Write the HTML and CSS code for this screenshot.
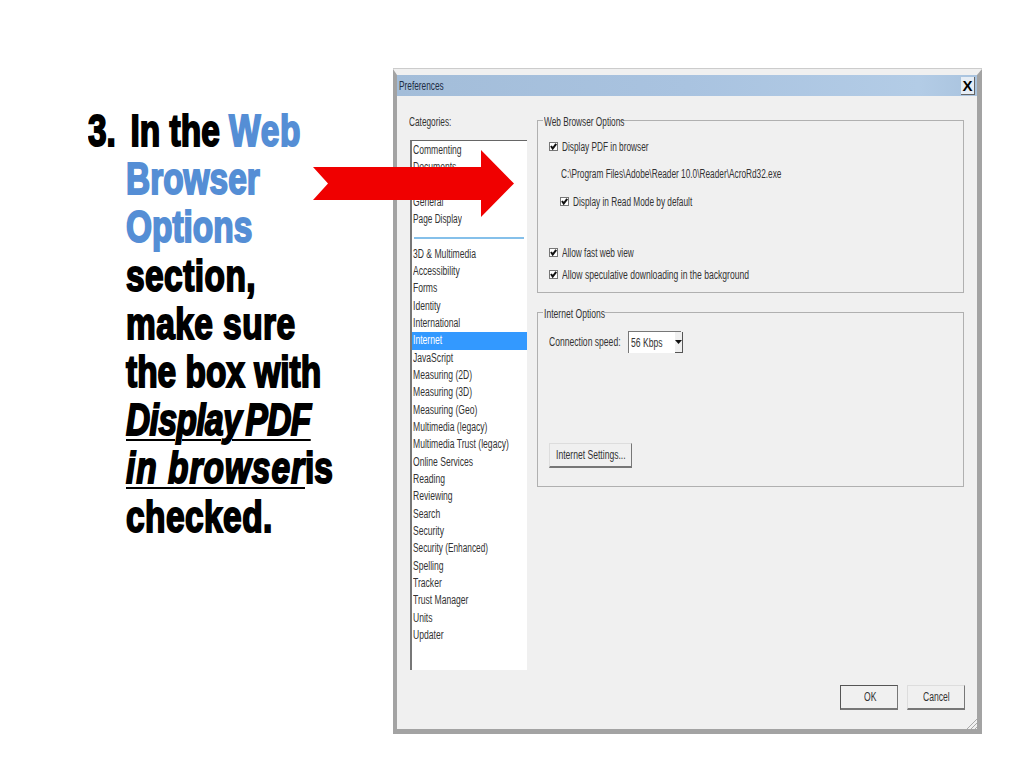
FILE: index.html
```html
<!DOCTYPE html>
<html lang="en">
<head>
  <meta charset="UTF-8" />
  <title>Preferences - Web Browser Options</title>
  <link rel="stylesheet" href="styles.css">
</head>
<body>

  <div class="slide">
    <!-- Step text -->
    <div class="step">
      <div class="step-line"><span class="step-num">3.</span><span>In the <span class="blue web">Web</span></span></div>
      <div class="step-body">
        <div class="blue">Browser</div>
        <div class="blue">Options</div>
        <div class="wide">section,</div>
        <div class="wide">make sure</div>
        <div>the box with</div>
        <div><em class="pdf pdf-first">Display PDF</em></div>
        <div><em class="pdf pdf-second">in browser</em>is</div>
        <div class="wide">checked.</div>
      </div>
    </div>

    <!-- Preferences dialog -->
    <div class="dialog">
      <div class="titlebar">
        <span class="tx tx-tight">Preferences</span>
        <span class="close">X</span>
      </div>

      <div class="dialog-main">
        <div class="categories">
          <div class="cat-label"><span class="tx tx-tight">Categories:</span></div>
          <div class="cat-list">
            <div class="cat-item"><span class="tx">Commenting</span></div>
            <div class="cat-item"><span class="tx">Documents</span></div>
            <div class="cat-item"><span class="tx">Full Screen</span></div>
            <div class="cat-item"><span class="tx">General</span></div>
            <div class="cat-item"><span class="tx tx-tight">Page Display</span></div>
            <div class="cat-sep"></div>
            <div class="cat-item"><span class="tx">3D &amp; Multimedia</span></div>
            <div class="cat-item"><span class="tx">Accessibility</span></div>
            <div class="cat-item"><span class="tx">Forms</span></div>
            <div class="cat-item"><span class="tx">Identity</span></div>
            <div class="cat-item"><span class="tx">International</span></div>
            <div class="cat-item selected"><span class="tx">Internet</span></div>
            <div class="cat-item"><span class="tx">JavaScript</span></div>
            <div class="cat-item"><span class="tx">Measuring (2D)</span></div>
            <div class="cat-item"><span class="tx">Measuring (3D)</span></div>
            <div class="cat-item"><span class="tx">Measuring (Geo)</span></div>
            <div class="cat-item"><span class="tx">Multimedia (legacy)</span></div>
            <div class="cat-item"><span class="tx">Multimedia Trust (legacy)</span></div>
            <div class="cat-item"><span class="tx">Online Services</span></div>
            <div class="cat-item"><span class="tx">Reading</span></div>
            <div class="cat-item"><span class="tx">Reviewing</span></div>
            <div class="cat-item"><span class="tx">Search</span></div>
            <div class="cat-item"><span class="tx">Security</span></div>
            <div class="cat-item"><span class="tx tx-tight">Security (Enhanced)</span></div>
            <div class="cat-item"><span class="tx">Spelling</span></div>
            <div class="cat-item"><span class="tx">Tracker</span></div>
            <div class="cat-item"><span class="tx">Trust Manager</span></div>
            <div class="cat-item"><span class="tx">Units</span></div>
            <div class="cat-item"><span class="tx">Updater</span></div>
          </div>
        </div>

        <div class="panels">
          <div class="group group-web">
            <span class="legend"><span class="tx tx-tight">Web Browser Options</span></span>
            <div class="check-row row-display">
              <svg class="check" viewBox="0 0 9 9"><rect x="0.5" y="0.5" width="8" height="8" fill="#fff" stroke="#777"/><path d="M2 4 L3.7 6.6 L7.2 1.8" fill="none" stroke="#111" stroke-width="2"/></svg>
              <span class="tx tx-tight">Display PDF in browser</span>
            </div>
            <div class="path-row"><span class="tx tx-tight">C:\Program Files\Adobe\Reader 10.0\Reader\AcroRd32.exe</span></div>
            <div class="check-row row-read">
              <svg class="check" viewBox="0 0 9 9"><rect x="0.5" y="0.5" width="8" height="8" fill="#fff" stroke="#777"/><path d="M2 4 L3.7 6.6 L7.2 1.8" fill="none" stroke="#111" stroke-width="2"/></svg>
              <span class="tx tx-tight">Display in Read Mode by default</span>
            </div>
            <div class="check-row row-fast">
              <svg class="check" viewBox="0 0 9 9"><rect x="0.5" y="0.5" width="8" height="8" fill="#fff" stroke="#777"/><path d="M2 4 L3.7 6.6 L7.2 1.8" fill="none" stroke="#111" stroke-width="2"/></svg>
              <span class="tx tx-tight">Allow fast web view</span>
            </div>
            <div class="check-row row-spec">
              <svg class="check" viewBox="0 0 9 9"><rect x="0.5" y="0.5" width="8" height="8" fill="#fff" stroke="#777"/><path d="M2 4 L3.7 6.6 L7.2 1.8" fill="none" stroke="#111" stroke-width="2"/></svg>
              <span class="tx">Allow speculative downloading in the background</span>
            </div>
          </div>

          <div class="group group-inet">
            <span class="legend"><span class="tx">Internet Options</span></span>
            <div class="speed-row">
              <span class="speed-label"><span class="tx">Connection speed:</span></span>
              <div class="select">
                <span class="select-val"><span class="tx">56 Kbps</span></span>
                <span class="select-btn"><svg width="7" height="4" viewBox="0 0 7 4"><path d="M0 0 H7 L3.5 4 Z" fill="#111"/></svg></span>
              </div>
            </div>
            <button class="btn btn-settings"><span class="tx">Internet Settings...</span></button>
          </div>
        </div>
      </div>

      <div class="dialog-foot">
        <button class="btn btn-ok"><span class="tx">OK</span></button>
        <button class="btn btn-cancel"><span class="tx">Cancel</span></button>
      </div>

      <svg class="grip" width="11" height="11" viewBox="0 0 11 11"><path d="M11 1 L1 11 M11 5 L5 11 M11 9 L9 11" stroke="#aaa" stroke-width="1"/></svg>
    </div>

    <!-- Red arrow over the dialog -->
    <svg class="arrow" width="202" height="68" viewBox="0 0 202 68"><path d="M0 17 H168 V0 L201 33.5 L168 67 V50 H0 L15 33.5 Z" fill="#f00000"/></svg>
  </div>

</body>
</html>
```

FILE: styles.css
```css
* {
  margin: 0;
  padding: 0;
  box-sizing: border-box;
}

body {
  background: #fff;
  font-family: "Liberation Sans", sans-serif;
}

.slide {
  position: relative;
  width: 1024px;
  height: 768px;
  display: flex;
  align-items: flex-start;
  padding: 69px 0 0 88px;
}

/* Step text: no Impact here, so squeeze a heavy sans */
.step {
  flex: none;
  width: 305px;
  margin-top: 38px;
  font-size: 44px;
  font-weight: bold;
  line-height: 48.2px;
  color: #000;
  -webkit-text-stroke: 2px currentColor;
  white-space: nowrap;
  transform: scaleX(0.76);
  transform-origin: left top;
}

.step-line {
  display: flex;
}

.step-num {
  width: 56px;
  flex: none;
}

.step-line .blue,
.step-body .blue {
  color: #558ed5;
}

.web {
  letter-spacing: 1px;
}

.wide {
  letter-spacing: 0.6px;
}

.step-body {
  padding-left: 50px;
}

.pdf {
  text-decoration: underline;
  text-decoration-thickness: 2px;
  text-underline-offset: 4px;
}

.pdf-first {
  word-spacing: -6px;
  letter-spacing: -0.7px;
}

.pdf-second {
  letter-spacing: 1.3px;
}

/* Dialog */
.dialog {
  position: relative;
  flex: none;
  width: 589px;
  height: 665px;
  background: #f0f0f0;
  border-style: solid;
  border-color: #a3a3a3;
  border-top-color: #f0f0f0;
  border-width: 6px 5px 5px 4px;
  box-shadow: 0 -1px 0 #ccc;
  font-size: 12px;
  color: #333;
  display: flex;
  flex-direction: column;
}

/* dialog labels are squeezed the same way */
.tx {
  display: inline-block;
  white-space: nowrap;
  transform: scaleX(0.715);
  transform-origin: left center;
}

.tx-tight {
  transform: scaleX(0.69);
}

.titlebar {
  height: 21px;
  flex: none;
  padding: 0 2px;
  display: flex;
  align-items: center;
  justify-content: space-between;
  background: linear-gradient(to right, #a3bdd9, #a9c3e0 50%, #b3cce6 90%, #a9c3de);
  color: #1d2c44;
}

.close {
  width: 14px;
  height: 18px;
  background: #e6edf5;
  border-right: 1px solid #666;
  border-bottom: 1px solid #666;
  text-align: center;
  font-size: 15px;
  font-weight: bold;
  line-height: 18px;
  color: #000;
}

.dialog-main {
  display: flex;
  padding-left: 13px;
  height: 574px;
}

.categories {
  width: 117px;
  flex: none;
  margin-right: 10px;
}

.cat-label {
  margin-top: 19px;
  height: 25px;
  line-height: 15px;
  margin-left: -1px;
}

.cat-list {
  height: 530px;
  background: #fff;
  border-left: 2px solid #777;
  border-top: 1px solid #666;
  padding-top: 1px;
}

.cat-item {
  height: 17.33px;
  line-height: 17.33px;
  padding-left: 1px;
  white-space: nowrap;
}

.cat-item.selected {
  background: #3399ff;
  color: #fff;
}

.cat-sep {
  height: 2px;
  margin: 8px 3px 7px 2px;
  background: #85c0ea;
}

.panels {
  width: 427px;
  flex: none;
  padding-top: 24px;
}

.group {
  position: relative;
  border: 1px solid #b0b0b0;
  padding-left: 11px;
}

.group-web {
  height: 173px;
  margin-bottom: 19px;
}

.group-inet {
  height: 175px;
}

.legend {
  position: absolute;
  top: -6px;
  left: 5px;
  width: 76px;
  padding: 0 1px;
  background: #f0f0f0;
  line-height: 15px;
}

.group-inet .legend {
  width: 62px;
}

.check-row {
  display: flex;
  align-items: center;
  gap: 4px;
  height: 15px;
}

.check {
  width: 9px;
  height: 9px;
  flex: none;
}

.row-display {
  margin-top: 18px;
}

.path-row {
  margin: 13px 0 0 12px;
  height: 15px;
  line-height: 15px;
}

.row-read {
  margin: 12px 0 0 11px;
}

.row-fast {
  margin-top: 36px;
}

.row-spec {
  margin-top: 7px;
}

.speed-row {
  display: flex;
  align-items: center;
  margin-top: 18px;
  height: 22px;
}

.speed-label {
  width: 79px;
}

.select {
  display: flex;
  width: 53px;
  height: 22px;
  background: #fff;
  border-left: 1px solid #777;
  border-top: 1px solid #777;
  align-items: center;
}

.select-val {
  flex: 1;
  padding-left: 2px;
}

.select-btn {
  width: 15px;
  height: 21px;
  background: #f0f0f0;
  border-right: 1px solid #555;
  border-bottom: 1px solid #555;
  display: flex;
  align-items: center;
  justify-content: center;
}

.btn {
  display: block;
  height: 25px;
  background: #f0f0f0;
  border: 1px solid #ddd;
  border-right-color: #777;
  border-bottom: 2px solid #777;
  font-family: inherit;
  font-size: 12px;
  color: #333;
  white-space: nowrap;
  text-align: left;
}

.btn-settings {
  width: 83px;
  margin-top: 90px;
  padding-left: 6px;
}

.dialog-foot {
  display: flex;
  justify-content: flex-end;
  gap: 9px;
  padding: 15px 12px 0 0;
}

.btn-ok {
  width: 58px;
  padding-left: 23px;
  border-top: 1px solid #555;
  border-left: 1px solid #555;
}

.btn-cancel {
  width: 58px;
  padding-left: 15px;
}

.grip {
  position: absolute;
  right: 0;
  bottom: 0;
}

/* Arrow */
.arrow {
  position: absolute;
  left: 313px;
  top: 150px;
}
```
